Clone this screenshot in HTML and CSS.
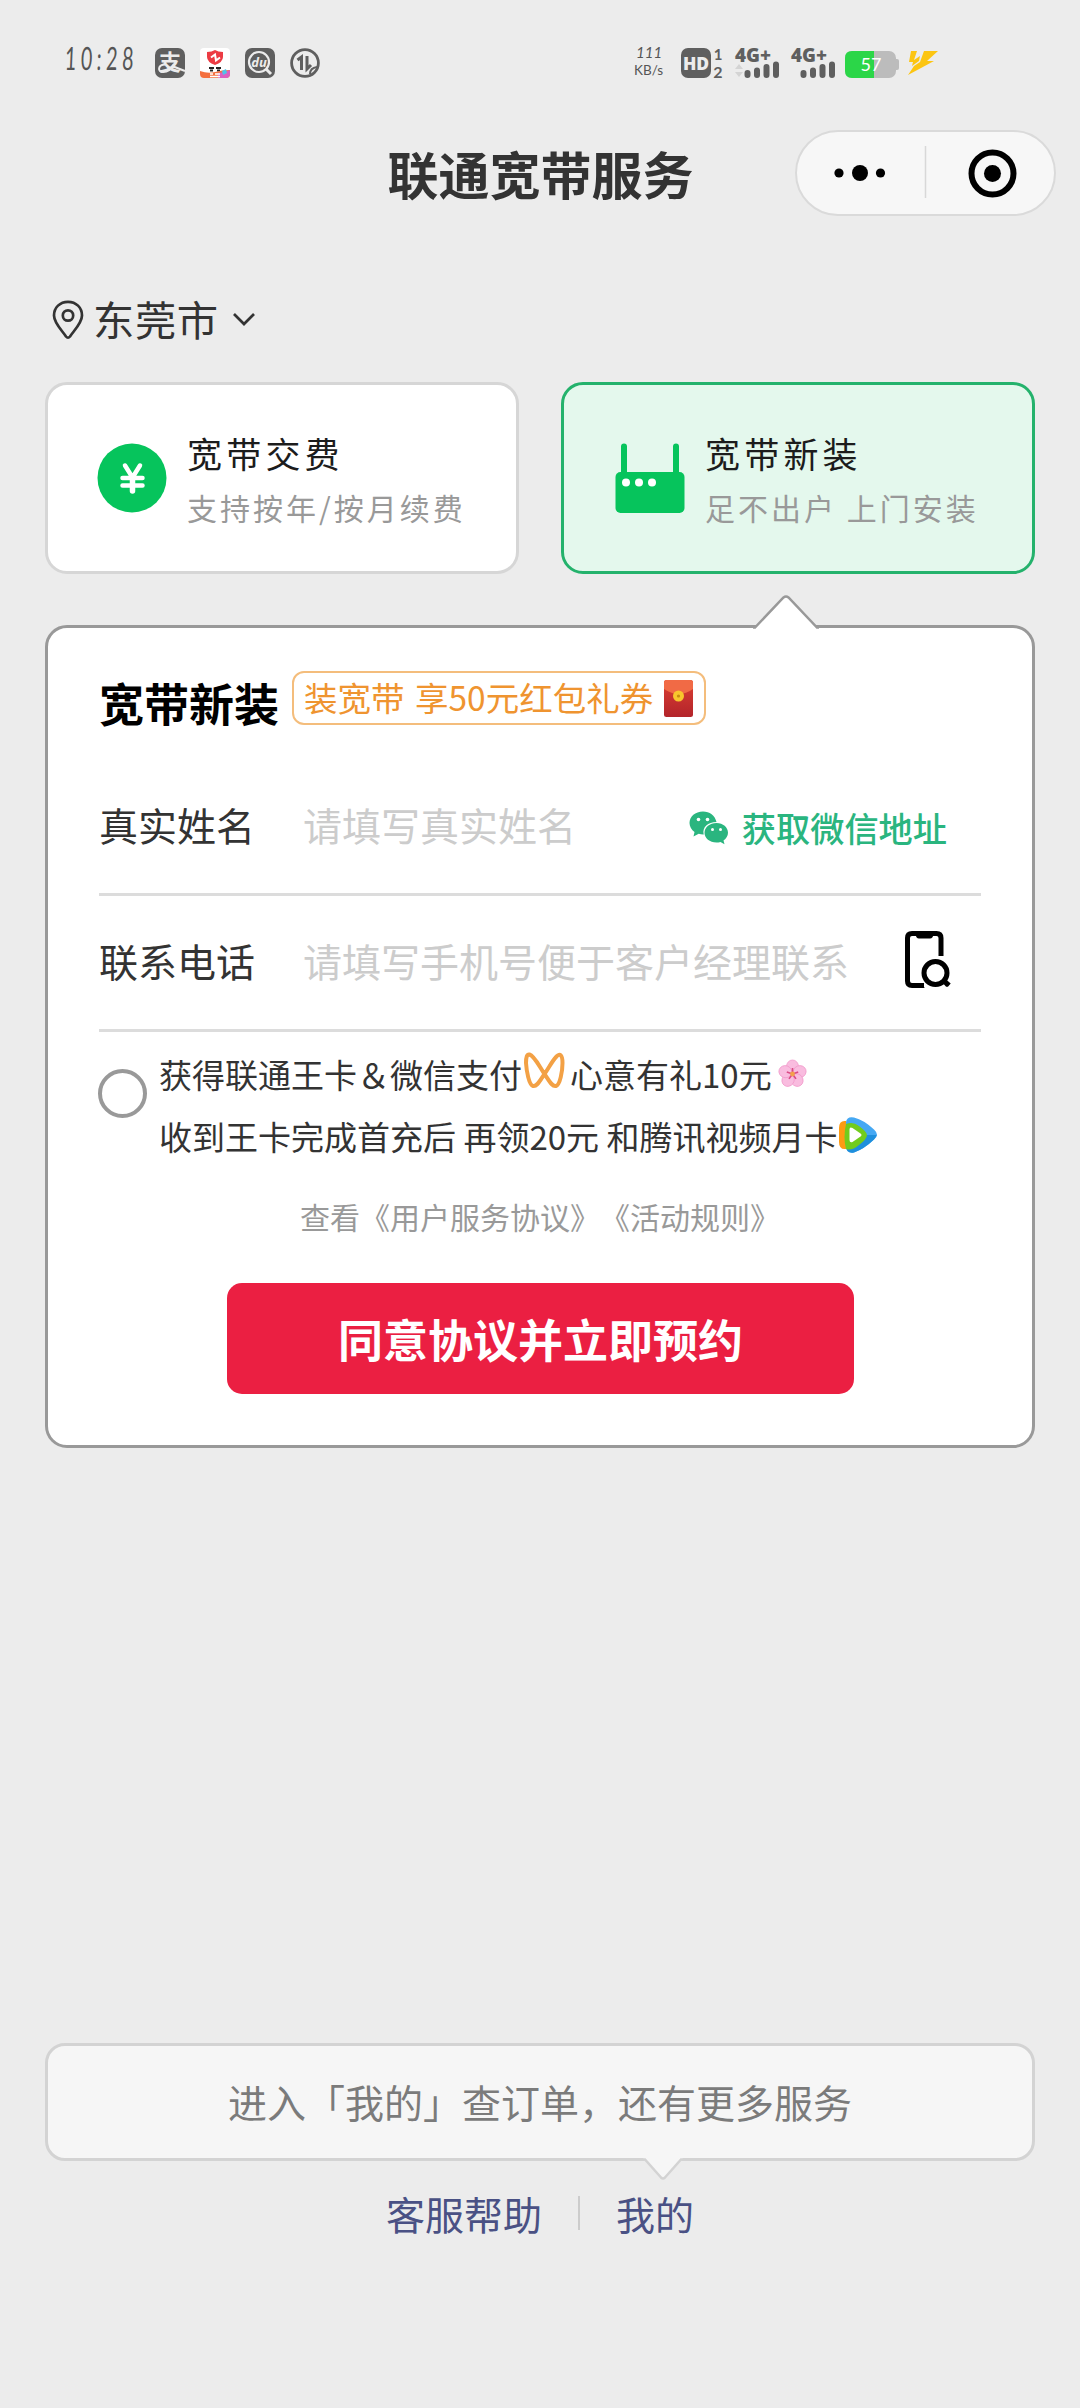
FILE: index.html
```html
<!DOCTYPE html>
<html lang="zh-CN">
<head>
<meta charset="utf-8">
<title>联通宽带服务</title>
<link rel="stylesheet" href="styles.css">
</head>
<body>
<div class="page">
  <div class="status">
    <span class="clock">10:28</span>
    <div class="status-apps">
      <svg width="30" height="30" viewBox="0 0 30 30"><rect width="30" height="30" rx="7" fill="#5f5f5f"/><text x="15" y="21.500" font-size="22" font-weight="700" text-anchor="middle" fill="#ececec">支</text><path d="M10 16.500C3 16.500 2 24 8 24c5 0 9-4 11-8M17 18l13 5" fill="none" stroke="#ececec" stroke-width="2"/></svg>
      <svg width="30" height="30" viewBox="0 0 30 30"><rect width="30" height="30" rx="4" fill="#fff"/><path d="M7 4q5 0 8-2 3 2 8 2v5q0 5-8 8-8-3-8-8z" fill="#ec3b43"/><path d="M11 9.500l4-3 1 6 4-3" fill="none" stroke="#fff" stroke-width="2"/><path d="M9 20h5m2 0h5M10 22.500h3m4 0h3" stroke="#222" stroke-width="2"/><path d="M0 23q8 3 15 1t15-2v4q0 4-4 4H4q-4 0-4-4z" fill="#f4703f"/><path d="M18 25q6 0 12-3v4q0 4-4 4h-8z" fill="#dc5fc0"/><path d="M22 23l4-2 1 4-4 2z" fill="#4fc3e8"/><path d="M10 26h3m2 0h5M10 28.500h10" stroke="#fff" stroke-width="1.500"/></svg>
      <svg width="30" height="30" viewBox="0 0 30 30"><rect width="30" height="30" rx="7" fill="#5f5f5f"/><circle cx="14" cy="14" r="10" fill="none" stroke="#ececec" stroke-width="2.200"/><path d="M21 21l5 5" stroke="#ececec" stroke-width="3"/><text x="14" y="18.500" font-size="13" font-weight="700" font-style="italic" text-anchor="middle" fill="#ececec" class="latin">du</text></svg>
      <svg width="30" height="30" viewBox="0 0 30 30" fill="none" stroke="#5f5f5f"><circle cx="15" cy="15" r="13.400" stroke-width="2.800"/><path d="M7.500 12l4-3V22M17 8v13l4-4" stroke-width="3"/><path d="M20 26q0-6 7-7" stroke-width="2"/></svg>
    </div>
    <div class="status-right">
      <div class="speed"><span class="speed-num">111</span><span class="speed-unit">KB/s</span></div>
      <svg width="43" height="30" viewBox="0 0 43 30"><rect width="30" height="30" rx="7" fill="#5f5f5f"/><text x="15" y="21.500" font-size="17.500" font-weight="800" text-anchor="middle" fill="#ececec" class="latin">HD</text><text x="37" y="11.500" font-size="15" font-weight="700" text-anchor="middle" fill="#5f5f5f" class="thin">1</text><text x="37" y="29.500" font-size="16" font-weight="700" text-anchor="middle" fill="#5f5f5f" class="thin">2</text></svg>
      <svg class="sig1" width="46" height="30" viewBox="0 0 46 30"><text x="0" y="14" font-size="19.500" font-weight="800" fill="#5f5f5f" class="latin" textLength="36" lengthAdjust="spacingAndGlyphs">4G+</text><path d="M0 21l4-5 4 5zM0 24l4 5 4-5z" fill="#d4d4d4"/><path d="M12.500 25v2M22 22.500V27M31.500 19v8M41 16.500V27" stroke="#5f5f5f" stroke-width="6" stroke-linecap="round"/></svg>
      <svg class="sig2" width="46" height="30" viewBox="0 0 46 30"><text x="0" y="14" font-size="19.500" font-weight="800" fill="#5f5f5f" class="latin" textLength="36" lengthAdjust="spacingAndGlyphs">4G+</text><path d="M12.500 25v2M22 22.500V27M31.500 19v8M41 16.500V27" stroke="#5f5f5f" stroke-width="6" stroke-linecap="round"/></svg>
      <svg class="battery" width="54" height="27" viewBox="0 0 54 27"><rect width="51" height="27" rx="7" fill="#bcbcbc"/><rect x="49" y="8" width="5" height="11" rx="2" fill="#bcbcbc"/><path d="M7 0h22v27H7q-7 0-7-7V7q0-7 7-7z" fill="#2bd648"/><text x="15.500" y="19.500" font-size="18" fill="#fff" class="thin" textLength="21" lengthAdjust="spacing">57</text></svg>
      <svg class="bolt" width="30" height="26" viewBox="0 0 30 26" fill="#fcc512"><path d="M3 1h6L6 10 12 6l-1 5-7 5 1-4H1z"/><path d="M16 1h14L19 11h7L0 25l6-9 6-4z"/></svg>
    </div>
  </div>

  <header class="nav">
    <h1>联通宽带服务</h1>
    <div class="capsule">
      <svg width="257" height="82" viewBox="797 132 257 82"><circle cx="839" cy="173" r="4.600"/><circle cx="860" cy="173" r="8"/><circle cx="880.500" cy="173" r="4.600"/><path d="M925.500 146v52" stroke="#d8d8d8" stroke-width="1.500"/><circle cx="992.500" cy="173.500" r="21" fill="none" stroke="#000" stroke-width="6"/><circle cx="992.500" cy="173.500" r="8.500"/></svg>
    </div>
  </header>

  <div class="location">
    <svg width="32" height="40" viewBox="0 0 32 40" fill="none" stroke="#333" stroke-width="2.700"><path d="M16 1.800C8 1.800 2 7.500 2 15.500c0 7.500 8 15 12 21q2 2.500 4 0c4-6 12-13.500 12-21C30 7.500 24 1.800 16 1.800z"/><circle cx="16" cy="15.500" r="5.200"/></svg>
    <span>东莞市</span>
    <svg class="chevron" width="22" height="13" viewBox="0 0 22 13" fill="none" stroke="#333" stroke-width="2.700"><path d="M1 1l10 10L21 1"/></svg>
  </div>

  <div class="tabs">
    <div class="tab">
      <svg width="70" height="70" viewBox="0 0 70 70"><circle cx="35" cy="35" r="34.500" fill="#06c45c"/><path d="M28 22.500l7.500 12L43 22.500M25.500 35h20M25.500 42.500h20" fill="none" stroke="#fff" stroke-width="4.500" stroke-linecap="round"/><path d="M35.500 34v14" stroke="#fff" stroke-width="5.500" stroke-linecap="round"/></svg>
      <div class="tab-text"><div class="tab-title">宽带交费</div><div class="tab-sub">支持按年/按月续费</div></div>
    </div>
    <div class="tab tab-on">
      <svg width="70" height="70" viewBox="0 0 70 70"><path d="M9 3.500V32M61 3.500V32" stroke="#06c45c" stroke-width="6" stroke-linecap="round"/><rect x=".5" y="29" width="69" height="41" rx="5" fill="#06c45c"/><g fill="#fff"><circle cx="11" cy="39.500" r="4"/><circle cx="24" cy="39.500" r="4"/><circle cx="37" cy="39.500" r="4"/></g></svg>
      <div class="tab-text"><div class="tab-title">宽带新装</div><div class="tab-sub">足不出户 上门安装</div></div>
    </div>
  </div>

  <main class="panel">
    <svg class="panel-arrow" width="68" height="36" viewBox="0 0 68 36"><path d="M0 36l3-3L31.500 3.500q2.500-2 5 0L65 33l3 3z" fill="#fff"/><path d="M1 33.500h2L31.500 3.500q2.500-2 5 0L65 33.500h2" fill="none" stroke="#999" stroke-width="2.500"/></svg>
    <div class="heading">
      <h2>宽带新装</h2>
      <div class="coupon"><span>装宽带 享50元红包礼券</span>
        <svg width="29" height="37" viewBox="0 0 29 37"><defs><linearGradient id="env" x2="0" y2="1"><stop offset="0" stop-color="#db3f33"/><stop offset="1" stop-color="#b3242a"/></linearGradient></defs><rect width="29" height="37" rx="2.500" fill="url(#env)"/><path d="M0 2.500Q0 0 2.500 0h24Q29 0 29 2.500V9q-14 10-29 0z" fill="#f16a45"/><circle cx="14.500" cy="16" r="5.500" fill="#f8c62d"/><circle cx="14.500" cy="16" r="1.600" fill="#c58c10"/></svg>
      </div>
    </div>

    <div class="field">
      <label>真实姓名</label><span class="placeholder">请填写真实姓名</span>
      <div class="wx">
        <svg width="40" height="34" viewBox="0 0 40 34"><path d="M14 .5C6.300.5.500 5.600.500 12c0 3.600 2 6.800 5 9L4.500 25.500l5.200-2.700q2.500.8 5 .7C13 16 19 11 27.500 11 26 4.500 20.600.5 14 .5z" fill="#2ab57f"/><path d="M27.500 12c-6.800 0-12 4.300-12 9.800S20.700 31.500 27.500 31.500q2 0 4-.6l4 2.300-1-3.600c2.700-2 4.500-4.700 4.500-7.800C39 16.300 34 12 27.500 12z" fill="#2ab57f"/><g fill="#fff"><circle cx="9.500" cy="8.500" r="1.800"/><circle cx="18.500" cy="8.500" r="1.800"/><circle cx="23.500" cy="18.500" r="1.500"/><circle cx="31.500" cy="18.500" r="1.500"/></g></svg>
        <span>获取微信地址</span>
      </div>
    </div>
    <div class="field">
      <label>联系电话</label><span class="placeholder">请填写手机号便于客户经理联系</span>
      <svg class="phone" width="46" height="58" viewBox="0 0 46 58"><path d="M19 54.500H7Q2.500 54.500 2.500 50V7Q2.500 2.500 7 2.500H31.500Q36 2.500 36 7V25" fill="none" stroke="#000" stroke-width="5"/><path d="M10 2h19q-1 5.500-4 5.500H14Q11 7.500 10 2zM14 52l6 5H8v-5z"/><circle cx="30.500" cy="42" r="11.500" fill="none" stroke="#000" stroke-width="5"/><path d="M38 49l5 5.500M41 54.500l3-3.500" stroke="#000" stroke-width="4.500"/></svg>
    </div>

    <div class="agree">
      <i class="radio"></i>
      <div class="agree-text">
        <div class="line"><span>获得联通王卡＆微信支付</span>
          <svg class="butterfly" width="41" height="37" viewBox="0 0 41 37" fill="none" stroke="#f3a145" stroke-width="4"><path d="M5.500 2.500C10.500 4 15 14 20.500 22 25 28.500 28 35 32 34c4-1 6.500-15 6.500-23 0-8-2.500-10-6-6.500C28 9 25 16 20.500 22 16 28.500 13 35 9 34 5 33 2.500 19 2 11 2 5 3 2 5.500 2.500z"/></svg>
          <span>心意有礼10元</span>
          <svg class="flower" width="29" height="30" viewBox="0 0 29 30"><g fill="#f9bcdf" stroke="#f19acb" stroke-width=".8"><ellipse cx="14.500" cy="7.500" rx="6" ry="6.500"/><ellipse cx="14.500" cy="7.500" rx="6" ry="6.500" transform="rotate(72 14.500 15)"/><ellipse cx="14.500" cy="7.500" rx="6" ry="6.500" transform="rotate(144 14.500 15)"/><ellipse cx="14.500" cy="7.500" rx="6" ry="6.500" transform="rotate(216 14.500 15)"/><ellipse cx="14.500" cy="7.500" rx="6" ry="6.500" transform="rotate(288 14.500 15)"/></g><path d="M14.500 9v6l-5.700-1.900M14.500 15l5.700-1.900M14.500 15l3.500 4.900M14.500 15L11 19.900" stroke="#d94a86" stroke-width="1.600" fill="none"/><circle cx="14.500" cy="15" r="2.400" fill="#f2a04c"/></svg>
        </div>
        <div class="line"><span>收到王卡完成首充后 再领20元 和腾讯视频月卡</span>
          <svg class="video" width="39" height="36" viewBox="0 0 39 36"><path d="M7 4Q0 3 0 11v14q0 8 7 7z" fill="#fd9b13"/><path d="M7 5q1-6 8-4.500Q25 3 35 12.500q6 5.500 0 10Q25 32 15 35.500 8 37 7 29z" fill="#45a8f3"/><path d="M7 29q0 8 8 6.500Q25 32 35 22.500q2-2 2.500-4.500H20z" fill="#1f8fdc"/><path d="M7 7q7-3 13 2 8 6 8 9 0 4-8 10-7 6-13 4-3-12 0-25z" fill="#71cc1d"/><path d="M10.500 12.500q0-3 3-1.500l8 5.500q2 1.500 0 3l-8 5.500q-3 1-3-2z" fill="#fff"/></svg>
        </div>
      </div>
    </div>
    <div class="rules">查看《用户服务协议》《活动规则》</div>
    <button class="submit">同意协议并立即预约</button>
  </main>

  <footer class="footer">
    <div class="tip">进入「我的」查订单，还有更多服务
      <svg class="tip-arrow" width="42" height="24" viewBox="0 0 42 24"><path d="M1 0L3 3l16 17q2 2 4 0L39 3l2-3z" fill="#f6f6f6"/><path d="M1 1.500h2L19 19.500q2 2 4 0L39 1.500h2" fill="none" stroke="#d3d3d3" stroke-width="2.500"/></svg>
    </div>
    <div class="links"><a>客服帮助</a><i></i><a>我的</a></div>
  </footer>
</div>
</body>
</html>
```
FILE: styles.css
```css
* { box-sizing: border-box; }
body { margin: 0; background: #ececec; color: #333; font-family: "Noto Sans CJK SC", sans-serif; }
h1, h2 { margin: 0; }
svg { display: block; flex: none; overflow: visible; }
span, label, a { white-space: nowrap; }
.page { width: 1080px; height: 2408px; display: flex; flex-direction: column; }
.latin { font-family: "Open Sans", sans-serif; }
.thin { font-family: Lato, sans-serif; }

.status { height: 126px; display: flex; align-items: center; padding-left: 65px; color: #555; }
.clock { width: 125px; margin: -10px -35px 0 0; flex: none; font: 400 32px/44px Lato, sans-serif; letter-spacing: 7.500px; transform: scaleX(.61) skewX(-4deg); transform-origin: left; }
.status-apps { display: flex; gap: 15px; }
.status-right { display: flex; align-items: center; margin-left: 314px; }
.speed { width: 47px; font-family: Lato, sans-serif; display: flex; flex-direction: column; margin-top: -4px; }
.speed-num { font-size: 15px; line-height: 19px; padding-left: 2px; font-style: italic; }
.speed-unit { font-size: 13.500px; line-height: 17px; }
.sig1, .sig2 { margin-left: 10.500px; }
.battery { margin-left: 8px; margin-top: 2px; }
.bolt { margin-left: 9px; }

.nav { height: 94px; position: relative; display: flex; align-items: center; justify-content: center; }
.nav h1 { font-size: 51px; line-height: 74px; font-weight: 700; padding-left: 1px; }
.capsule { position: absolute; right: 24px; top: 4px; width: 261px; height: 86px; border: 2px solid #dadada; border-radius: 43px; background: #f7f7f7; overflow: hidden; }

.location { height: 60px; margin: 70px 0 0 52px; display: flex; align-items: center; font-size: 41.300px; line-height: 60px; }
.location span { margin: -5px 0 0 9px; letter-spacing: .6px; }
.chevron { margin-left: 14px; margin-top: -2px; }

.tabs { margin: 32px 45px 0; display: grid; grid-template-columns: 474px 474px; justify-content: space-between; }
.tab { height: 192px; border: 3px solid #d6d6d6; border-radius: 22px; background: #fff; display: flex; align-items: center; gap: 20px; padding-left: 49px; }
.tab-on { border-color: #24b26c; background: #e4f8ed; padding-left: 51px; }
.tab-text { padding-top: 4px; }
.tab-title { font-size: 35px; line-height: 54px; letter-spacing: 4.200px; color: #1c1c1c; white-space: nowrap; }
.tab-sub { font-size: 30px; line-height: 54px; letter-spacing: 3px; color: #999; white-space: nowrap; }

.panel { position: relative; height: 823px; margin: 51px 45px 0; border: 3px solid #999; border-radius: 22px; background: #fff; padding: 0 51px; display: flex; flex-direction: column; }
.panel-arrow { position: absolute; left: 704px; top: -34px; }
.heading { display: flex; padding-top: 42px; height: 132px; }
.heading h2 { font-size: 45px; line-height: 66px; font-weight: 700; color: #000; margin-right: 13px; }
.coupon { height: 54px; width: 414px; margin-top: 1px; border: 2px solid #f4bd7c; border-radius: 12px; display: flex; align-items: center; justify-content: space-between; padding: 0 11px 0 10px; color: #ef9430; font-size: 33.500px; line-height: 50px; word-spacing: 3px; }
.coupon span { margin-top: -3px; }
.field { height: 136px; display: flex; align-items: center; border-bottom: 3px solid #dcdcdc; font-size: 39px; }
.field label { width: 204px; margin-top: -5px; }
.placeholder { color: #ccc; margin-top: -5px; }
.wx { margin-left: auto; margin-right: 34px; display: flex; align-items: center; gap: 13px; color: #2ab57f; font-size: 34.200px; font-weight: 500; }
.wx svg { margin-top: 3px; }
.phone { margin-left: auto; margin-right: 30px; margin-bottom: 6px; }
.agree { display: flex; padding-top: 11px; height: 150px; }
.radio { width: 49px; height: 49px; border: 4px solid #999; border-radius: 50%; margin: 26px 12px 0 -1px; flex: none; }
.line { display: flex; align-items: center; height: 62px; font-size: 33px; line-height: 62px; }
.butterfly { margin: -7px 5px 0 2px; }
.flower { margin-left: 6px; }
.video { margin: -2px 0 0 2px; }
.rules { text-align: center; font-size: 30px; line-height: 44px; margin-top: 12px; color: #999; text-spacing-trim: space-all; }
.submit { width: 627px; height: 111px; margin: 45px 0 0 128px; padding: 0; border: 0; border-radius: 15px; background: #eb1f42; color: #fff; font: 700 45px/111px "Noto Sans CJK SC", sans-serif; flex: none; }

.footer { margin: 595px 45px 0; }
.tip { position: relative; height: 118px; border: 3px solid #d3d3d3; border-radius: 20px; background: #f6f6f6; text-align: center; font-size: 39px; line-height: 110px; color: #7b7b7b; }
.tip-arrow { position: absolute; left: 594px; top: 112px; }
.links { height: 104px; display: flex; justify-content: center; align-items: center; font-size: 39px; line-height: 60px; color: #4a5184; }
.links i { width: 2px; height: 34px; margin: 0 36px; background: #ccc; }
```
